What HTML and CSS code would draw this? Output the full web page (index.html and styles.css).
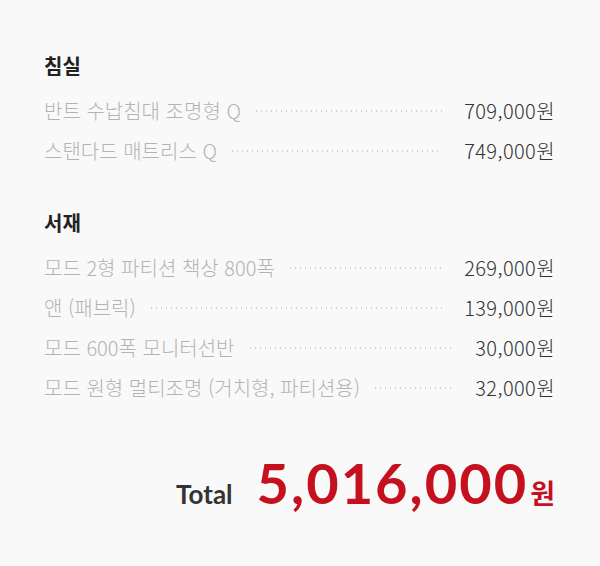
FILE: index.html
```html
<!DOCTYPE html>
<html lang="ko">
<head>
<meta charset="utf-8">
<link rel="stylesheet" href="styles.css">
</head>
<body>
<div class="page">
  <section class="group">
    <h2 class="group-title">침실</h2>
    <div class="row"><span class="label">반트 수납침대 조명형 Q</span><span class="leader"></span><span class="price">709,000원</span></div>
    <div class="row"><span class="label">스탠다드 매트리스 Q</span><span class="leader"></span><span class="price">749,000원</span></div>
  </section>
  <section class="group">
    <h2 class="group-title">서재</h2>
    <div class="row"><span class="label">모드 2형 파티션 책상 800폭</span><span class="leader"></span><span class="price">269,000원</span></div>
    <div class="row"><span class="label">앤 (패브릭)</span><span class="leader"></span><span class="price">139,000원</span></div>
    <div class="row"><span class="label">모드 600폭 모니터선반</span><span class="leader"></span><span class="price">30,000원</span></div>
    <div class="row"><span class="label">모드 원형 멀티조명 (거치형, 파티션용)</span><span class="leader"></span><span class="price">32,000원</span></div>
  </section>
  <div class="total">
    <span class="total-label">Total</span>
    <span class="total-amount">5,016,000<span class="total-unit">원</span></span>
  </div>
</div>
</body>
</html>
```

FILE: styles.css
```css
html, body {
  margin: 0;
  padding: 0;
  background: #f9f9f9;
}
body {
  font-family: "Noto Sans CJK KR", "Noto Sans", sans-serif;
  width: 600px;
  height: 566px;
  overflow: hidden;
}
.page {
  padding: 50px 47px 0 44px;
}
.group {
  margin-bottom: 37px;
}
.group-title {
  margin: 0 0 8px;
  font-size: 20px;
  font-weight: 700;
  color: #222;
  line-height: 32px;
}
.row {
  display: flex;
  align-items: center;
  height: 40px;
  font-size: 20px;
  font-weight: 300;
}
.label {
  color: #b3b3b3;
  white-space: nowrap;
}
.leader {
  flex: 1;
  height: 2px;
  margin: 2px 22px 0 13px;
  background-image: radial-gradient(circle, #d0d0d0 0.8px, transparent 1.1px);
  background-size: 5px 2px;
  background-repeat: repeat-x;
}
.price {
  color: #333;
  white-space: nowrap;
  letter-spacing: 0.4px;
  margin-right: -2px;
}
.total {
  display: flex;
  justify-content: flex-end;
  align-items: baseline;
  margin-top: 48px;
  margin-right: -2px;
}
.total-label {
  font-family: "Lato", "Noto Sans", sans-serif;
  font-size: 26px;
  font-weight: 700;
  color: #333;
  margin-right: 24px;
}
.total-amount {
  font-family: "Lato", "Noto Sans", sans-serif;
  font-size: 56px;
  font-weight: 700;
  color: #c5101f;
  line-height: 1;
  letter-spacing: 2px;
}
.total-unit {
  font-family: "Noto Sans CJK KR", sans-serif;
  font-size: 27px;
  margin-left: 2px;
  letter-spacing: 0;
}
```
